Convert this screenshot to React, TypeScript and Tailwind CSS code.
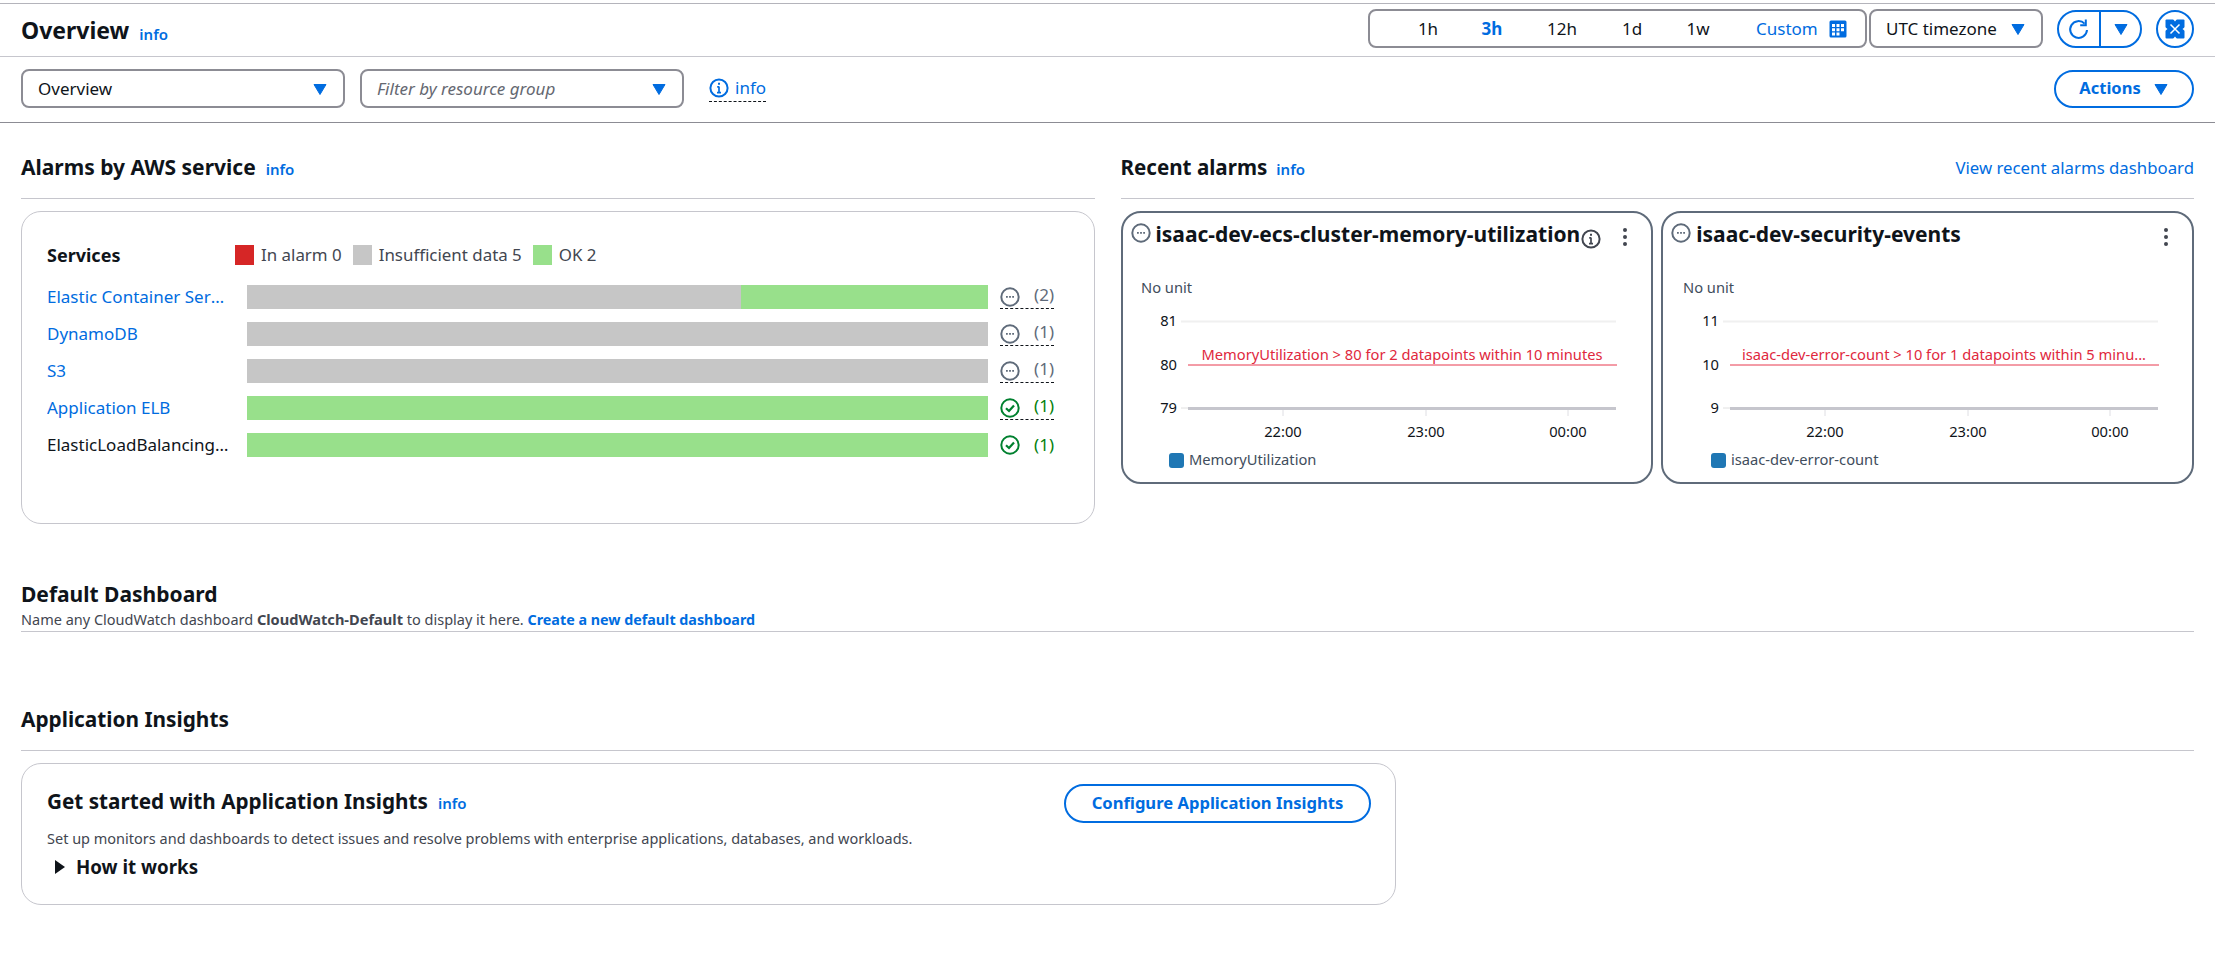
import type { ReactElement, ReactNode } from "react";

const BLUE = "#006ce0";

function Caret({ className = "" }: { className?: string }): ReactElement {
  return (
    <svg className={className} width="16" height="16" viewBox="0 0 16 16" aria-hidden="true">
      <path d="M2 3.500h12L8 13.500z" fill={BLUE} stroke={BLUE} strokeWidth="1" strokeLinejoin="round" />
    </svg>
  );
}

function StatusIcon({ kind, size = 20 }: { kind: "pending" | "ok"; size?: number }): ReactElement {
  const color = kind === "ok" ? "#00802f" : "#5f6b7a";
  return (
    <svg width={size} height={size} viewBox="0 0 20 20" className="shrink-0" aria-hidden="true">
      <circle cx="10" cy="10" r="8.7" fill="none" stroke={color} strokeWidth="2" />
      {kind === "ok" ? (
        <path d="M6 10.200l3 2.800 5-5.600" fill="none" stroke={color} strokeWidth="2.200" />
      ) : (
        <path d="M6 9h1.800v1.800H6zM9.100 9h1.800v1.800H9.100zM12.200 9H14v1.800h-1.800z" fill={color} />
      )}
    </svg>
  );
}

function InfoGlyph({ color, size = 20 }: { color: string; size?: number }): ReactElement {
  return (
    <svg width={size} height={size} viewBox="0 0 20 20" className="shrink-0" aria-hidden="true">
      <circle cx="10" cy="10" r="8.600" fill="none" stroke={color} strokeWidth="2" />
      <path d="M10 8.600v6M8 14.600h4M8.200 8.800H10" fill="none" stroke={color} strokeWidth="1.700" />
      <path d="M9 4.800h2v2H9z" fill={color} />
    </svg>
  );
}

function InfoLink({ className = "" }: { className?: string }): ReactElement {
  return <span className={`text-[15px] font-semibold text-[#006ce0] ${className}`}>info</span>;
}

function CalendarIcon(): ReactElement {
  return (
    <svg width="18" height="18" viewBox="0 0 18 18" aria-hidden="true">
      <rect x="0.500" y="0.500" width="17" height="17" rx="1.500" fill={BLUE} />
      <path
        d="M3 4h3v3H3zM7.500 4h3v3h-3zM12 4h3v3h-3zM3 8.200h3v3H3zM7.500 8.200h3v3h-3zM12 8.200h3v3h-3zM3 12.400h3v3H3zM7.500 12.400h3v3h-3z"
        fill="#fff"
      />
    </svg>
  );
}

function RefreshIcon(): ReactElement {
  return (
    <svg width="22" height="22" viewBox="0 0 22 22" aria-hidden="true">
      <path d="M16.600 5.600A8.400 8.400 0 1 0 19 12" fill="none" stroke={BLUE} strokeWidth="2" />
      <path d="M17.800 1.600v5.600h-5.600" fill="none" stroke={BLUE} strokeWidth="2" />
    </svg>
  );
}

function ExpandIcon(): ReactElement {
  return (
    <svg width="20" height="20" viewBox="0 0 20 20" aria-hidden="true">
      <rect x="0.500" y="0.500" width="19" height="19" rx="1" fill={BLUE} />
      <path d="M5.500 5.500l9 9M14.500 5.500l-9 9" stroke="#fff" strokeWidth="1.500" />
      <path d="M8 0h4l-2 2.500zM8 20h4l-2-2.500zM0 8v4l2.500-2zM20 8v4l-2.500-2z" fill="#fff" />
    </svg>
  );
}

function Select({ label, italic }: { label: string; italic?: boolean }): ReactElement {
  return (
    <div className="flex h-[39px] w-[324px] items-center justify-between rounded-lg border-2 border-[#8c8c94] pl-[15px] pr-[15px]">
      <span className={italic ? "text-[17px] italic text-[#656871]" : "text-[17px] text-[#0f141a]"}>{label}</span>
      <Caret />
    </div>
  );
}

function TopBar(): ReactElement {
  return (
    <header className="mt-[3px] flex h-[53px] items-center border-t border-[#b4b4bb] pb-[3px] pl-[21px] pr-[21px]">
      <h1 className="mt-[4px] text-[23px] font-bold text-[#0f141a]">Overview</h1>
      <InfoLink className="ml-[10px] mt-[11px]" />
      <div className="ml-auto flex items-center">
        <div className="flex h-[39px] w-[499px] items-center rounded-lg border-2 border-[#8c8c94] text-[17px] text-[#0f141a]">
          <span className="ml-[46px] w-[24px] text-center">1h</span>
          <span className="ml-[40px] w-[24px] text-center font-bold text-[#006ce0]">3h</span>
          <span className="ml-[41px] w-[34px] text-center">12h</span>
          <span className="ml-[41px] w-[24px] text-center">1d</span>
          <span className="ml-[42px] w-[24px] text-center">1w</span>
          <span className="ml-[46px] text-[#006ce0]">Custom</span>
          <span className="ml-[11px] flex"><CalendarIcon /></span>
        </div>
        <div className="ml-[2px] flex h-[39px] w-[174px] items-center justify-between rounded-lg border-2 border-[#8c8c94] pl-[15px] pr-[15px] text-[17px] text-[#0f141a]">
          UTC timezone
          <Caret />
        </div>
        <div className="ml-[14px] flex h-[38px] w-[85px] items-center rounded-full border-2 border-[#006ce0]">
          <span className="flex w-[40px] justify-center"><RefreshIcon /></span>
          <span className="flex h-full flex-1 items-center justify-center border-l-2 border-[#006ce0]"><Caret /></span>
        </div>
        <div className="ml-[14px] flex size-[38px] items-center justify-center rounded-full border-2 border-[#006ce0]">
          <ExpandIcon />
        </div>
      </div>
    </header>
  );
}

function FilterBar(): ReactElement {
  return (
    <div className="flex h-[67px] items-center gap-[15px] border-y border-t-[#c6c6cd] border-b-[#8c8c94] pb-[2px] pl-[21px] pr-[21px]">
      <Select label="Overview" />
      <Select label="Filter by resource group" italic />
      <div className="ml-[10px] flex h-[26px] items-center gap-[6px] border-b border-dashed border-[#0f141a]">
        <InfoGlyph color={BLUE} />
        <span className="text-[17px] text-[#006ce0]">info</span>
      </div>
      <div className="ml-auto flex h-[38px] w-[140px] items-center justify-center gap-[12px] rounded-full border-2 border-[#006ce0] text-[16.5px] font-bold text-[#006ce0]">
        Actions
        <Caret />
      </div>
    </div>
  );
}

function SectionHeader({ children }: { children: ReactNode }): ReactElement {
  return <div className="flex h-[76px] items-center border-b border-[#c6c6cd] pt-[14px]">{children}</div>;
}

interface ServiceRow {
  name: string;
  link: boolean;
  insufficient: number;
  ok: number;
  underlined: boolean;
}

const SERVICES: ServiceRow[] = [
  { name: "Elastic Container Service", link: true, insufficient: 2, ok: 1, underlined: true },
  { name: "DynamoDB", link: true, insufficient: 1, ok: 0, underlined: true },
  { name: "S3", link: true, insufficient: 1, ok: 0, underlined: true },
  { name: "Application ELB", link: true, insufficient: 0, ok: 1, underlined: true },
  { name: "ElasticLoadBalancingV2", link: false, insufficient: 0, ok: 1, underlined: false },
];

function LegendItem({ color, label }: { color: string; label: string }): ReactElement {
  return (
    <span className="flex items-center gap-[7px] text-[16.9px] text-[#424650]">
      <span className={`h-[20px] w-[19px] ${color}`} />
      {label}
    </span>
  );
}

function ServiceBar({ row }: { row: ServiceRow }): ReactElement {
  const total = row.insufficient + row.ok;
  const isOk = row.insufficient === 0;
  return (
    <div className="flex h-[24px] items-center">
      <span
        className={`w-[200px] shrink-0 truncate pr-[16px] text-[17px] ${row.link ? "text-[#006ce0]" : "text-[#0f141a]"}`}
      >
        {row.name}
      </span>
      <div className="flex h-full w-[741px] shrink-0">
        {row.insufficient > 0 ? (
          <div className="bg-[#c6c6c6]" style={{ width: `${(row.insufficient / total) * 100}%` }} />
        ) : null}
        {row.ok > 0 ? <div className="flex-1 bg-[#98e08b]" /> : null}
      </div>
      <div
        className={`ml-[12px] flex h-[24px] w-[54px] justify-between ${row.underlined ? "items-start border-b border-dashed border-[#0f141a]" : "items-center"}`}
      >
        <span className={row.underlined ? "mt-[2px] flex" : "flex"}>
          <StatusIcon kind={isOk ? "ok" : "pending"} />
        </span>
        <span className={`text-[17px] leading-[20px] ${isOk ? "text-[#037f0c]" : "text-[#5f6b7a]"}`}>
          ({row.insufficient > 0 ? row.insufficient : row.ok})
        </span>
      </div>
    </div>
  );
}

function AlarmsByService(): ReactElement {
  return (
    <section>
      <SectionHeader>
        <h2 className="text-[21px] font-bold text-[#0f141a]">Alarms by AWS service</h2>
        <InfoLink className="ml-[10px] mt-[4px]" />
      </SectionHeader>
      <div className="mt-[12px] h-[313px] rounded-[20px] border border-[#c6c6cd] pl-[25px] pt-[31px]">
        <div className="flex h-[24px] items-center">
          <h3 className="w-[188px] text-[18px] font-bold text-[#0f141a]">Services</h3>
          <div className="flex items-center gap-[11px]">
            <LegendItem color="bg-[#d62626]" label="In alarm 0" />
            <LegendItem color="bg-[#c6c6c6]" label="Insufficient data 5" />
            <LegendItem color="bg-[#98e08b]" label="OK 2" />
          </div>
        </div>
        <div className="mt-[18px] flex flex-col gap-[13px]">
          {SERVICES.map((row) => (
            <ServiceBar key={row.name} row={row} />
          ))}
        </div>
      </div>
    </section>
  );
}

interface AlarmChartProps {
  title: string;
  metric: string;
  threshold: string;
  yLabels: [string, string, string];
  dx: number;
  showInfo?: boolean;
}

const TIMES = [
  { x: 160, label: "22:00" },
  { x: 303, label: "23:00" },
  { x: 445, label: "00:00" },
];

function AlarmChart({ title, metric, threshold, yLabels, dx, showInfo }: AlarmChartProps): ReactElement {
  return (
    <div className="relative h-[273px] overflow-hidden rounded-[20px] border-2 border-[#5f6b7a]">
      <div className="flex h-[44px] items-center pl-[8px]">
        <span className="-mt-[5px] flex"><StatusIcon kind="pending" /></span>
        <h3 className="ml-[5px] whitespace-nowrap text-[21px] font-bold text-[#0f141a]">{title}</h3>
      </div>
      {showInfo ? (
        <span className="absolute left-[458px] top-[16px] flex">
          <InfoGlyph color="#424650" />
        </span>
      ) : null}
      <svg className="absolute right-[22px] top-[14px]" width="8" height="20" viewBox="0 0 8 20" aria-hidden="true">
        <circle cx="4" cy="3" r="2" fill="#424650" />
        <circle cx="4" cy="10" r="2" fill="#424650" />
        <circle cx="4" cy="17" r="2" fill="#424650" />
      </svg>
      <svg className="block" width="528" height="225" viewBox="0 43 528 225">
        <g transform={`translate(${dx} 0)`} fontFamily="'Noto Sans', sans-serif" fontSize="14.7">
          <text x="18" y="79" fill="#414d5c">No unit</text>
          <path d="M58 107.500H493" stroke="#f0f0f0" strokeWidth="2" />
          <path d="M58 194H65" stroke="#e0e0e0" strokeWidth="1" />
          <text x="54" y="112" fill="#0f141a" textAnchor="end">{yLabels[0]}</text>
          <text x="54" y="156" fill="#0f141a" textAnchor="end">{yLabels[1]}</text>
          <text x="54" y="199" fill="#0f141a" textAnchor="end">{yLabels[2]}</text>
          <text x="279" y="146" fill="#e0283d" textAnchor="middle">{threshold}</text>
          <path d="M65 151H494" stroke="#e8384f" strokeWidth="1" />
          <path d="M65 194.500H493" stroke="#c6c6cd" strokeWidth="3" />
          {TIMES.map((t) => (
            <g key={t.label}>
              <path d={`M${t.x} 196V202`} stroke="#dedee3" strokeWidth="1" />
              <text x={t.x} y="223" fill="#0f141a" textAnchor="middle">{t.label}</text>
            </g>
          ))}
          <rect x="46" y="239" width="15" height="15" rx="3" fill="#1f77b4" />
          <text x="66" y="251" fill="#414d5c">{metric}</text>
        </g>
      </svg>
    </div>
  );
}

function RecentAlarms(): ReactElement {
  return (
    <section>
      <SectionHeader>
        <h2 className="text-[20.6px] font-bold text-[#0f141a]">Recent alarms</h2>
        <InfoLink className="ml-[9px] mt-[4px]" />
        <span className="ml-auto text-[16.8px] text-[#006ce0]">View recent alarms dashboard</span>
      </SectionHeader>
      <div className="mt-[12px] grid grid-cols-2 gap-[8px]">
        <AlarmChart
          title="isaac-dev-ecs-cluster-memory-utilization"
          metric="MemoryUtilization"
          threshold="MemoryUtilization > 80 for 2 datapoints within 10 minutes"
          yLabels={["81", "80", "79"]}
          dx={0}
          showInfo
        />
        <AlarmChart
          title="isaac-dev-security-events"
          metric="isaac-dev-error-count"
          threshold="isaac-dev-error-count > 10 for 1 datapoints within 5 minu..."
          yLabels={["11", "10", "9"]}
          dx={2}
        />
      </div>
    </section>
  );
}

function DefaultDashboard(): ReactElement {
  return (
    <section className="mt-[55px] border-b border-[#c6c6cd] pb-[1px]">
      <h2 className="text-[21px] font-bold leading-[30px] text-[#0f141a]">Default Dashboard</h2>
      <p className="text-[14.5px] leading-[20px] text-[#424650]">
        Name any CloudWatch dashboard <strong className="text-[14.6px] font-bold">CloudWatch-Default</strong> to display it here.{" "}
        <span className="text-[14.3px] font-bold text-[#006ce0]">Create a new default dashboard</span>
      </p>
    </section>
  );
}

function ApplicationInsights(): ReactElement {
  return (
    <section className="mt-[72px]">
      <h2 className="border-b border-[#c6c6cd] pb-[16px] text-[20.8px] font-bold leading-[30px] text-[#0f141a]">
        Application Insights
      </h2>
      <div className="mt-[12px] flex h-[142px] w-[1375px] items-start justify-between rounded-[20px] border border-[#c6c6cd] pl-[25px] pr-[24px]">
        <div className="pt-[23px]">
          <div className="flex items-center">
            <h3 className="text-[20.7px] font-bold leading-[28px] text-[#0f141a]">Get started with Application Insights</h3>
            <InfoLink className="ml-[10px] mt-[4px]" />
          </div>
          <p className="mt-[13px] text-[14.5px] leading-[20px] text-[#424650]">
            Set up monitors and dashboards to detect issues and resolve problems with enterprise applications, databases, and workloads.
          </p>
          <div className="mt-[7px] flex items-center pl-[8px]">
            <svg width="10" height="14" viewBox="0 0 10 14" aria-hidden="true">
              <path d="M0 0l10 7-10 7z" fill="#0f141a" />
            </svg>
            <span className="ml-[11px] text-[18.7px] font-bold leading-[24px] text-[#0f141a]">How it works</span>
          </div>
        </div>
        <div className="mt-[20px] flex h-[39px] w-[307px] items-center justify-center rounded-full border-2 border-[#006ce0] text-[16.6px] font-bold text-[#006ce0]">
          Configure Application Insights
        </div>
      </div>
    </section>
  );
}

export default function App(): ReactElement {
  return (
    <div className="min-h-[963px] bg-white font-['Noto_Sans','Open_Sans',sans-serif]">
      <TopBar />
      <FilterBar />
      <main className="pl-[21px] pr-[21px]">
        <div className="grid grid-cols-2 gap-[26px]">
          <AlarmsByService />
          <RecentAlarms />
        </div>
        <DefaultDashboard />
        <ApplicationInsights />
      </main>
    </div>
  );
}
